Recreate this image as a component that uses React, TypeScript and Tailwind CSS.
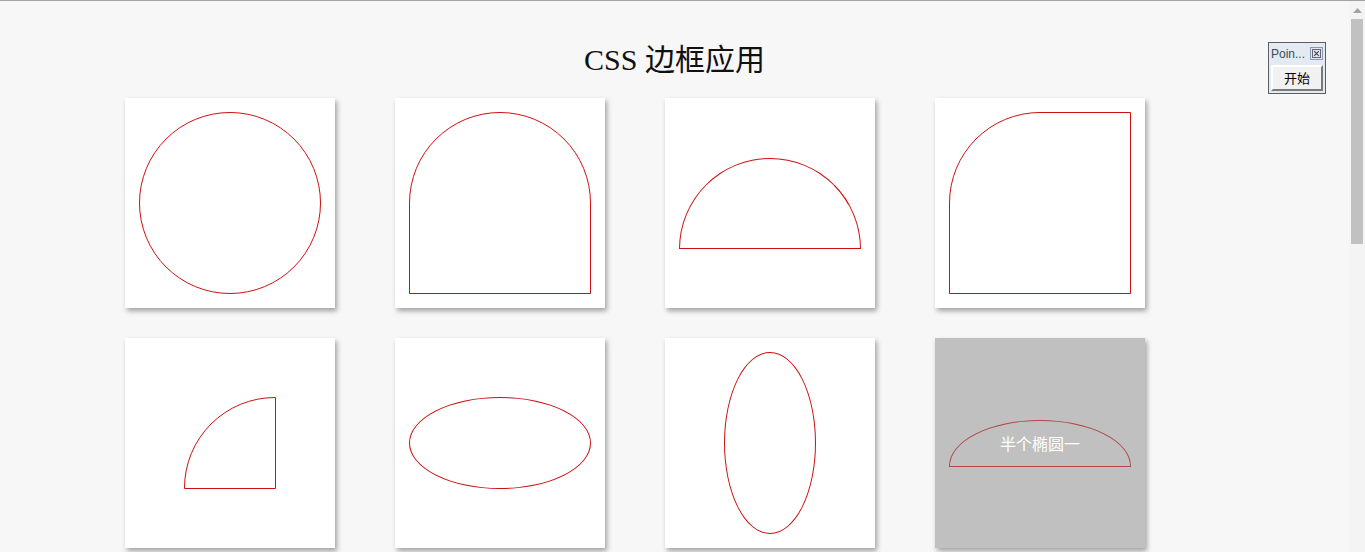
const cjk = "font-['Noto_Sans_CJK_SC',sans-serif]";

function Card({ children, gray = false }: { children?: React.ReactNode; gray?: boolean }) {
  return (
    <div
      className={`flex h-[210px] w-[210px] items-center justify-center shadow-[2px_3px_5px_rgba(0,0,0,0.35)] ${
        gray ? "bg-[#c0c0c0]" : "bg-white"
      }`}
    >
      {children}
    </div>
  );
}

function PointWidget() {
  return (
    <div className="absolute left-[1268px] top-[41px] w-[58px] border border-[#5a5f66] bg-[#e4eaf1] px-[2px] pt-[1px] pb-[2px]">
      <div className="flex h-[19px] items-center justify-between">
        <span className="font-['Liberation_Sans',sans-serif] text-[12px] leading-none text-[#3b4a5c]">Poin...</span>
        <span className="flex h-[13px] w-[13px] items-center justify-center border border-[#8a9bb0] bg-[#dfe6ee]">
          <svg width="9" height="9" viewBox="0 0 9 9">
            <rect x="0.5" y="0.5" width="8" height="8" fill="none" stroke="#667" strokeWidth="1" />
            <path d="M2.2 2.2 L6.8 6.8 M6.8 2.2 L2.2 6.8" stroke="#445" strokeWidth="1.1" />
          </svg>
        </span>
      </div>
      <div
        className={`mt-[2px] flex h-[26px] items-center justify-center border-2 border-t-white border-l-white border-r-[#7a7a7a] border-b-[#7a7a7a] bg-[#f1f1f1] text-[13px] text-black ${cjk}`}
      >
        开始
      </div>
    </div>
  );
}

function Scrollbar() {
  return (
    <div className="flex h-full w-[16px] flex-col items-center bg-[#f4f4f4]">
      <div className="flex h-[18px] items-center justify-center">
        <svg width="9" height="5" viewBox="0 0 9 5">
          <path d="M0 5 L4.5 0 L9 5 Z" fill="#a3a3a3" />
        </svg>
      </div>
      <div className="h-[225px] w-[12px] bg-[#c1c1c1]" />
    </div>
  );
}

export default function App() {
  return (
    <div className="relative flex h-[552px] w-[1365px] overflow-hidden border-t border-[#a3a3a3] bg-[#f7f7f7]">
      <div className="flex-1">
        <h1
          className={`mt-[41px] mb-[20px] h-[36px] text-center text-[30px] leading-[36px] font-normal text-[#111] font-['Liberation_Serif','Noto_Sans_CJK_SC',serif]`}
        >
          CSS 边框应用
        </h1>
        <div className="grid grid-cols-[repeat(4,210px)] gap-x-[60px] gap-y-[30px] pl-[125px]">
          <Card>
            <div className="h-[182px] w-[182px] rounded-full border border-[#cc1010]" />
          </Card>
          <Card>
            <div className="h-[182px] w-[182px] rounded-t-[91px] border border-[#cc1010]" />
          </Card>
          <Card>
            <div className="h-[91px] w-[182px] rounded-t-[91px] border border-[#cc1010]" />
          </Card>
          <Card>
            <div className="h-[182px] w-[182px] rounded-tl-[91px] border border-[#cc1010]" />
          </Card>
          <Card>
            <div className="h-[92px] w-[92px] rounded-tl-[91px] border border-[#cc1010]" />
          </Card>
          <Card>
            <div className="h-[92px] w-[182px] rounded-[91px/46px] border border-[#cc1010]" />
          </Card>
          <Card>
            <div className="h-[182px] w-[92px] rounded-[46px/91px] border border-[#cc1010]" />
          </Card>
          <Card gray>
            <div
              className={`flex h-[47px] w-[182px] items-center justify-center rounded-t-[91px_46px] border border-[#b04848] pb-[1px] text-[16px] text-white ${cjk}`}
            >
              半个椭圆一
            </div>
          </Card>
        </div>
      </div>
      <Scrollbar />
      <PointWidget />
    </div>
  );
}
